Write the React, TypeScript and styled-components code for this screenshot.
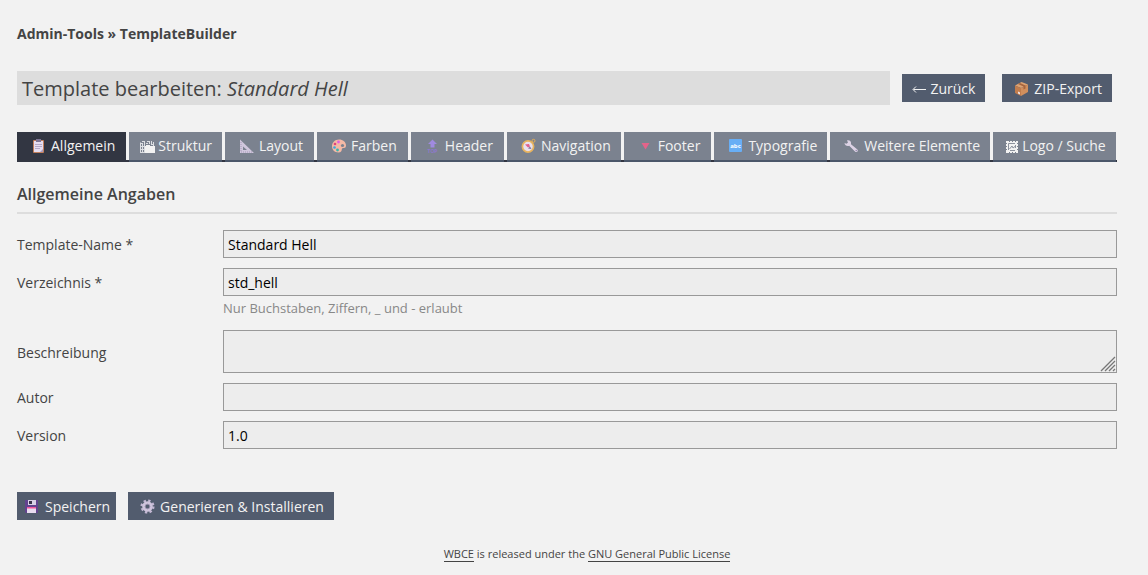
import React from "react";
import styled, { createGlobalStyle, css } from "styled-components";

const GlobalStyle = createGlobalStyle`
  *, *::before, *::after { box-sizing: border-box; }
  body {
    margin: 0;
    background: #f2f2f2;
    color: #444;
    font: 14px/20px "Open Sans", "Noto Sans", sans-serif;
  }
  button, input, textarea { font: inherit; }
`;

const Page = styled.main`
  padding: 24px 31px 10px 17px;
`;

const Breadcrumb = styled.nav`
  font-weight: 700;
`;

const CrumbLink = styled.a`
  color: inherit;
  text-decoration: none;
`;

const TitleRow = styled.header`
  display: flex;
  align-items: center;
  gap: 17px;
  margin-top: 27px;
  padding-right: 5px;
`;

const Title = styled.h1`
  flex: 1;
  margin: 0 -5px 0 0;
  padding: 2px 5px 0;
  background: #ddd;
  font-size: 20px;
  line-height: 32px;
  font-weight: 400;
`;

const Button = styled.button<{ $pad?: number }>`
  display: inline-flex;
  align-items: center;
  height: 28px;
  padding: 2px ${(p) => p.$pad ?? 10}px 0;
  border: 0;
  background: #525c6e;
  color: #f2f2f2;
  white-space: nowrap;
  cursor: pointer;
`;

const Tabs = styled.div`
  display: flex;
  gap: 3px;
  margin-top: 27px;
  background: linear-gradient(#323642, #323642) bottom / 100% 2px no-repeat;
`;

const Tab = styled.button<{ $active: boolean; $tight?: boolean }>`
  display: inline-flex;
  align-items: center;
  height: 30px;
  padding: 0 ${(p) => (p.$tight ? 10 : 11)}px 0 12px;
  border: 0;
  border-bottom: 2px solid #4b576a;
  background: #7b828f;
  color: #f2f2f2;
  white-space: nowrap;
  cursor: pointer;
  ${(p) =>
    p.$active &&
    css`
      background: #323642;
      border-color: #323642;
    `}
`;

const Glyph = styled.svg`
  flex: none;
  width: 18px;
  height: 16px;
  margin-right: 4px;
  overflow: visible;
`;

const NarrowGlyph = styled(Glyph)`
  width: 14px;
  margin-right: 3px;
`;

const ArrowGlyph = styled(Glyph)`
  width: 14px;
`;

const SectionTitle = styled.h2`
  margin: 20px 0 16px;
  padding-bottom: 6px;
  border-bottom: 2px solid #ddd;
  font-size: 16px;
  line-height: 24px;
  font-weight: 600;
`;

const Fields = styled.div`
  display: grid;
  gap: 10px;
`;

const Field = styled.div`
  display: grid;
  grid-template-columns: 206px 1fr;
  align-items: center;
`;

const Label = styled.label`
  padding-top: 2px;
  line-height: 26px;
`;

const control = css`
  display: block;
  width: 100%;
  padding: 0 4px;
  border: 1px solid #999;
  border-radius: 0;
  background: #ededed;
  color: #000;
  outline: none;
`;

const TextInput = styled.input`
  ${control}
  height: 28px;
`;

const AreaWrap = styled.div`
  position: relative;
`;

const TextArea = styled.textarea`
  ${control}
  height: 43px;
  resize: none;
`;

const Grip = styled.svg`
  position: absolute;
  right: 1px;
  bottom: 1px;
  width: 16px;
  height: 16px;
  pointer-events: none;
`;

const Hint = styled.small`
  grid-column: 2;
  color: #888;
  font-size: 13px;
  line-height: 24px;
`;

const Actions = styled.div`
  display: flex;
  gap: 12px;
  margin-top: 43px;
`;

const Footer = styled.footer`
  margin-top: 26px;
  padding-left: 40px;
  text-align: center;
  font-size: 11px;
  line-height: 16px;
`;

const FooterLink = styled.a`
  border-bottom: 1px solid #444;
  color: inherit;
  text-decoration: none;
`;

const ArrowLeftIcon = () => (
  <ArrowGlyph viewBox="0 0 14 16" aria-hidden="true">
    <path d="M14 8.500H1.500M4 5.500l-3 3 3 3" stroke="#f2f2f2" fill="none" />
  </ArrowGlyph>
);

const ClipboardIcon = () => (
  <Glyph viewBox="0 0 18 16" aria-hidden="true">
    <rect x="4" y="2" width="11" height="13" rx="1" fill="#c3805c" />
    <path d="M5 3h9v11H5z" fill="#e6def0" />
    <path d="M11 14l3-3v3z" fill="#a99bc0" />
    <path d="M7 1h5v3H7z" fill="#7d7594" />
    <path d="M6 6.500h7M6 8.500h7M6 10.500h5" stroke="#b4a9c8" strokeWidth="1" />
  </Glyph>
);

const DividersIcon = () => (
  <NarrowGlyph viewBox="0 0 14 16" aria-hidden="true">
    <path d="M4 15V8h1V7h4v1h5v7z" fill="#f2f2f2" />
    <path
      d="M-.5 15V4.500M1.500 15V6M3.500 14V6M-1 14.500h5M-1 11.500h5M-1 8.500h5M-1 5.500h3M1 3.500h3M3.500 3v3M5 5.500h2M6 3.500h3M8.500 3v3M10 6.500h3M10.500 3v4M12.500 4v4"
      stroke="#dcdee2"
      fill="none"
    />
  </NarrowGlyph>
);

const SetSquareIcon = () => (
  <Glyph viewBox="0 0 18 16" aria-hidden="true">
    <path fillRule="evenodd" d="M3 1.500L17 15H3zM6 8.500V12h4z" fill="#d0c6dc" />
    <path d="M4 4v10M4 14h11" stroke="#a69ab8" strokeDasharray="1 1" />
  </Glyph>
);

const PaletteIcon = () => (
  <Glyph viewBox="0 0 18 16" aria-hidden="true">
    <path
      d="M10 1.500c4 0 7 2.600 7 6 0 1.700-.8 2.500-2 2.500-1.300 0-2.200.4-2.200 1.500 0 1.400-.8 3-3.300 3C5.500 14.500 3 12 3 8.300 3 4.400 6 1.500 10 1.500z"
      fill="#f5b9a5"
    />
    <circle cx="13.500" cy="7.500" r="1.600" fill="#7b828f" />
    <circle cx="9.500" cy="4" r="1.400" fill="#e05fe0" />
    <circle cx="6" cy="6" r="1.300" fill="#e0457b" />
    <circle cx="5.500" cy="9.500" r="1.300" fill="#38a9e0" />
    <circle cx="8.500" cy="12" r="1.400" fill="#32b8b0" />
  </Glyph>
);

const TopIcon = () => (
  <Glyph viewBox="0 0 18 16" aria-hidden="true">
    <path d="M9.500 1.500L14 6h-2.500v3.500h-4V6H5z" fill="#a08ae0" />
    <text
      x="9.500"
      y="15"
      textAnchor="middle"
      fill="#8f78d0"
      fontSize="5"
      fontWeight="700"
      fontFamily="Open Sans, sans-serif"
    >
      TOP
    </text>
  </Glyph>
);

const CompassIcon = () => (
  <Glyph viewBox="0 0 18 16" aria-hidden="true">
    <circle cx="14.500" cy="2.800" r="1.500" fill="none" stroke="#e5ae55" />
    <circle cx="9" cy="8.500" r="5.600" fill="#e9e1ee" stroke="#e9b45e" strokeWidth="1.700" />
    <path d="M6 6.500l4-.5 1 2.500-2 1z" fill="#e0608b" />
    <path d="M12.500 11l-3.500-.5 2-2z" fill="#7b7398" />
  </Glyph>
);

const DownIcon = () => (
  <Glyph viewBox="0 0 18 16" aria-hidden="true">
    <path d="M5.500 5h8L9.500 11.500z" fill="#e4648a" />
  </Glyph>
);

const AbcIcon = () => (
  <Glyph viewBox="0 0 18 16" aria-hidden="true">
    <rect x="3" y="1" width="13" height="13" rx="1" fill="#68aef5" />
    <text
      x="9.500"
      y="10"
      textAnchor="middle"
      fill="#fff"
      fontSize="6"
      fontWeight="700"
      fontFamily="Open Sans, sans-serif"
    >
      abc
    </text>
  </Glyph>
);

const WrenchIcon = () => (
  <Glyph viewBox="0 0 18 16" aria-hidden="true">
    <path
      d="M5 2.500l1 2-1.500 1.300-2-.8C2.700 7.300 5 8.600 7.200 7.800l6 5.900c1.800 1.200 3.400-.7 2.200-2.200L9 6.200C9.600 3.600 7.400 1.700 5 2.500z"
      fill="#ddd3e6"
    />
    <circle cx="14.200" cy="12.500" r=".7" fill="#8c7fa5" />
  </Glyph>
);

const PictureIcon = () => (
  <NarrowGlyph viewBox="0 0 14 16" aria-hidden="true">
    <rect x="1" y="3" width="12" height="12" fill="#f2f2f2" />
    <path
      d="M1 5.500h1M1 8.500h1M1 11.500h1M12 5.500h1M12 8.500h1M12 11.500h1M4.500 3v1M7.500 3v1M10.500 3v1M4.500 14v1M7.500 14v1M10.500 14v1"
      stroke="#7b828f"
    />
    <path
      d="M3.500 12V5.500H10M4.500 11l2.500-3 1 2 2.500-2M5 12.500h5M10.500 7v3"
      stroke="#8c929d"
      fill="none"
    />
  </NarrowGlyph>
);

const PackageIcon = () => (
  <Glyph viewBox="0 0 18 16" aria-hidden="true">
    <path d="M3 4.500L9.500 1 16 3.500 9 7z" fill="#dda373" />
    <path d="M3 4.500L9 7v8l-6-3z" fill="#c27d4d" />
    <path d="M9 7l7-3.500V11L9 15z" fill="#d18f5d" />
    <path d="M6 3l5.500 2.500v3l2-1v-3L8 2z" fill="#a8653d" />
    <path d="M6 10.500l2 1v2l-2-1z" fill="#f0e4e4" />
  </Glyph>
);

const FloppyIcon = () => (
  <Glyph viewBox="0 0 18 16" aria-hidden="true">
    <path d="M2 1h13v13H3l-1-1z" fill="#62438f" />
    <path d="M5 1h8v5H5z" fill="#d9d0e6" />
    <path d="M6 2h3v3H6z" fill="#39334d" />
    <path d="M4 8h9v6H4z" fill="#e9dcf0" />
    <path d="M4 8h9v1.500H4z" fill="#f0529b" />
  </Glyph>
);

const GearIcon = () => (
  <Glyph viewBox="0 0 18 16" aria-hidden="true">
    <circle cx="9.500" cy="7.500" r="5.900" fill="none" stroke="#c4b8d4" strokeWidth="2.300" strokeDasharray="2.320 2.314" />
    <circle cx="9.500" cy="7.500" r="3.800" fill="none" stroke="#cfc4dc" strokeWidth="3" />
    <circle cx="9.500" cy="7.500" r="2.300" fill="none" stroke="#9a8fae" strokeWidth="1" />
  </Glyph>
);

const tabs = [
  { label: "Allgemein", Icon: ClipboardIcon },
  { label: "Struktur", Icon: DividersIcon, tight: true },
  { label: "Layout", Icon: SetSquareIcon },
  { label: "Farben", Icon: PaletteIcon },
  { label: "Header", Icon: TopIcon },
  { label: "Navigation", Icon: CompassIcon, tight: true },
  { label: "Footer", Icon: DownIcon },
  { label: "Typografie", Icon: AbcIcon, tight: true },
  { label: "Weitere Elemente", Icon: WrenchIcon, tight: true },
  { label: "Logo / Suche", Icon: PictureIcon, tight: true },
];

export default function App() {
  const [active, setActive] = React.useState(0);

  return (
    <>
      <GlobalStyle />
      <Page>
        <Breadcrumb>
          <CrumbLink href="#admin-tools">Admin-Tools</CrumbLink> » TemplateBuilder
        </Breadcrumb>
        <TitleRow>
          <Title>
            Template bearbeiten: <em>Standard Hell</em>
          </Title>
          <Button type="button">
            <ArrowLeftIcon />
            Zurück
          </Button>
          <Button type="button">
            <PackageIcon />
            ZIP-Export
          </Button>
        </TitleRow>
        <Tabs role="tablist">
          {tabs.map(({ label, Icon, tight }, i) => (
            <Tab
              key={label}
              type="button"
              role="tab"
              aria-selected={i === active}
              $active={i === active}
              $tight={tight}
              onClick={() => setActive(i)}
            >
              <Icon />
              {label}
            </Tab>
          ))}
        </Tabs>
        <form onSubmit={(e) => e.preventDefault()}>
          <SectionTitle>Allgemeine Angaben</SectionTitle>
          <Fields>
            <Field>
              <Label htmlFor="name">Template-Name *</Label>
              <TextInput id="name" defaultValue="Standard Hell" />
            </Field>
            <Field>
              <Label htmlFor="directory">Verzeichnis *</Label>
              <TextInput id="directory" defaultValue="std_hell" aria-describedby="directory-hint" />
              <Hint id="directory-hint">Nur Buchstaben, Ziffern, _ und - erlaubt</Hint>
            </Field>
            <Field>
              <Label htmlFor="description">Beschreibung</Label>
              <AreaWrap>
                <TextArea id="description" />
                <Grip viewBox="0 0 16 16" aria-hidden="true">
                  <path
                    d="M1 15L15 1M5 15L15 5M9 15l6-6M13 15l2-2"
                    stroke="#777"
                    strokeWidth="1.300"
                  />
                </Grip>
              </AreaWrap>
            </Field>
            <Field>
              <Label htmlFor="author">Autor</Label>
              <TextInput id="author" />
            </Field>
            <Field>
              <Label htmlFor="version">Version</Label>
              <TextInput id="version" defaultValue="1.0" />
            </Field>
          </Fields>
          <Actions>
            <Button type="submit" $pad={6}>
              <FloppyIcon />
              Speichern
            </Button>
            <Button type="button">
              <GearIcon />
              Generieren &amp; Installieren
            </Button>
          </Actions>
        </form>
        <Footer>
          <FooterLink href="#wbce">WBCE</FooterLink> is released under the{" "}
          <FooterLink href="#license">GNU General Public License</FooterLink>
        </Footer>
      </Page>
    </>
  );
}
